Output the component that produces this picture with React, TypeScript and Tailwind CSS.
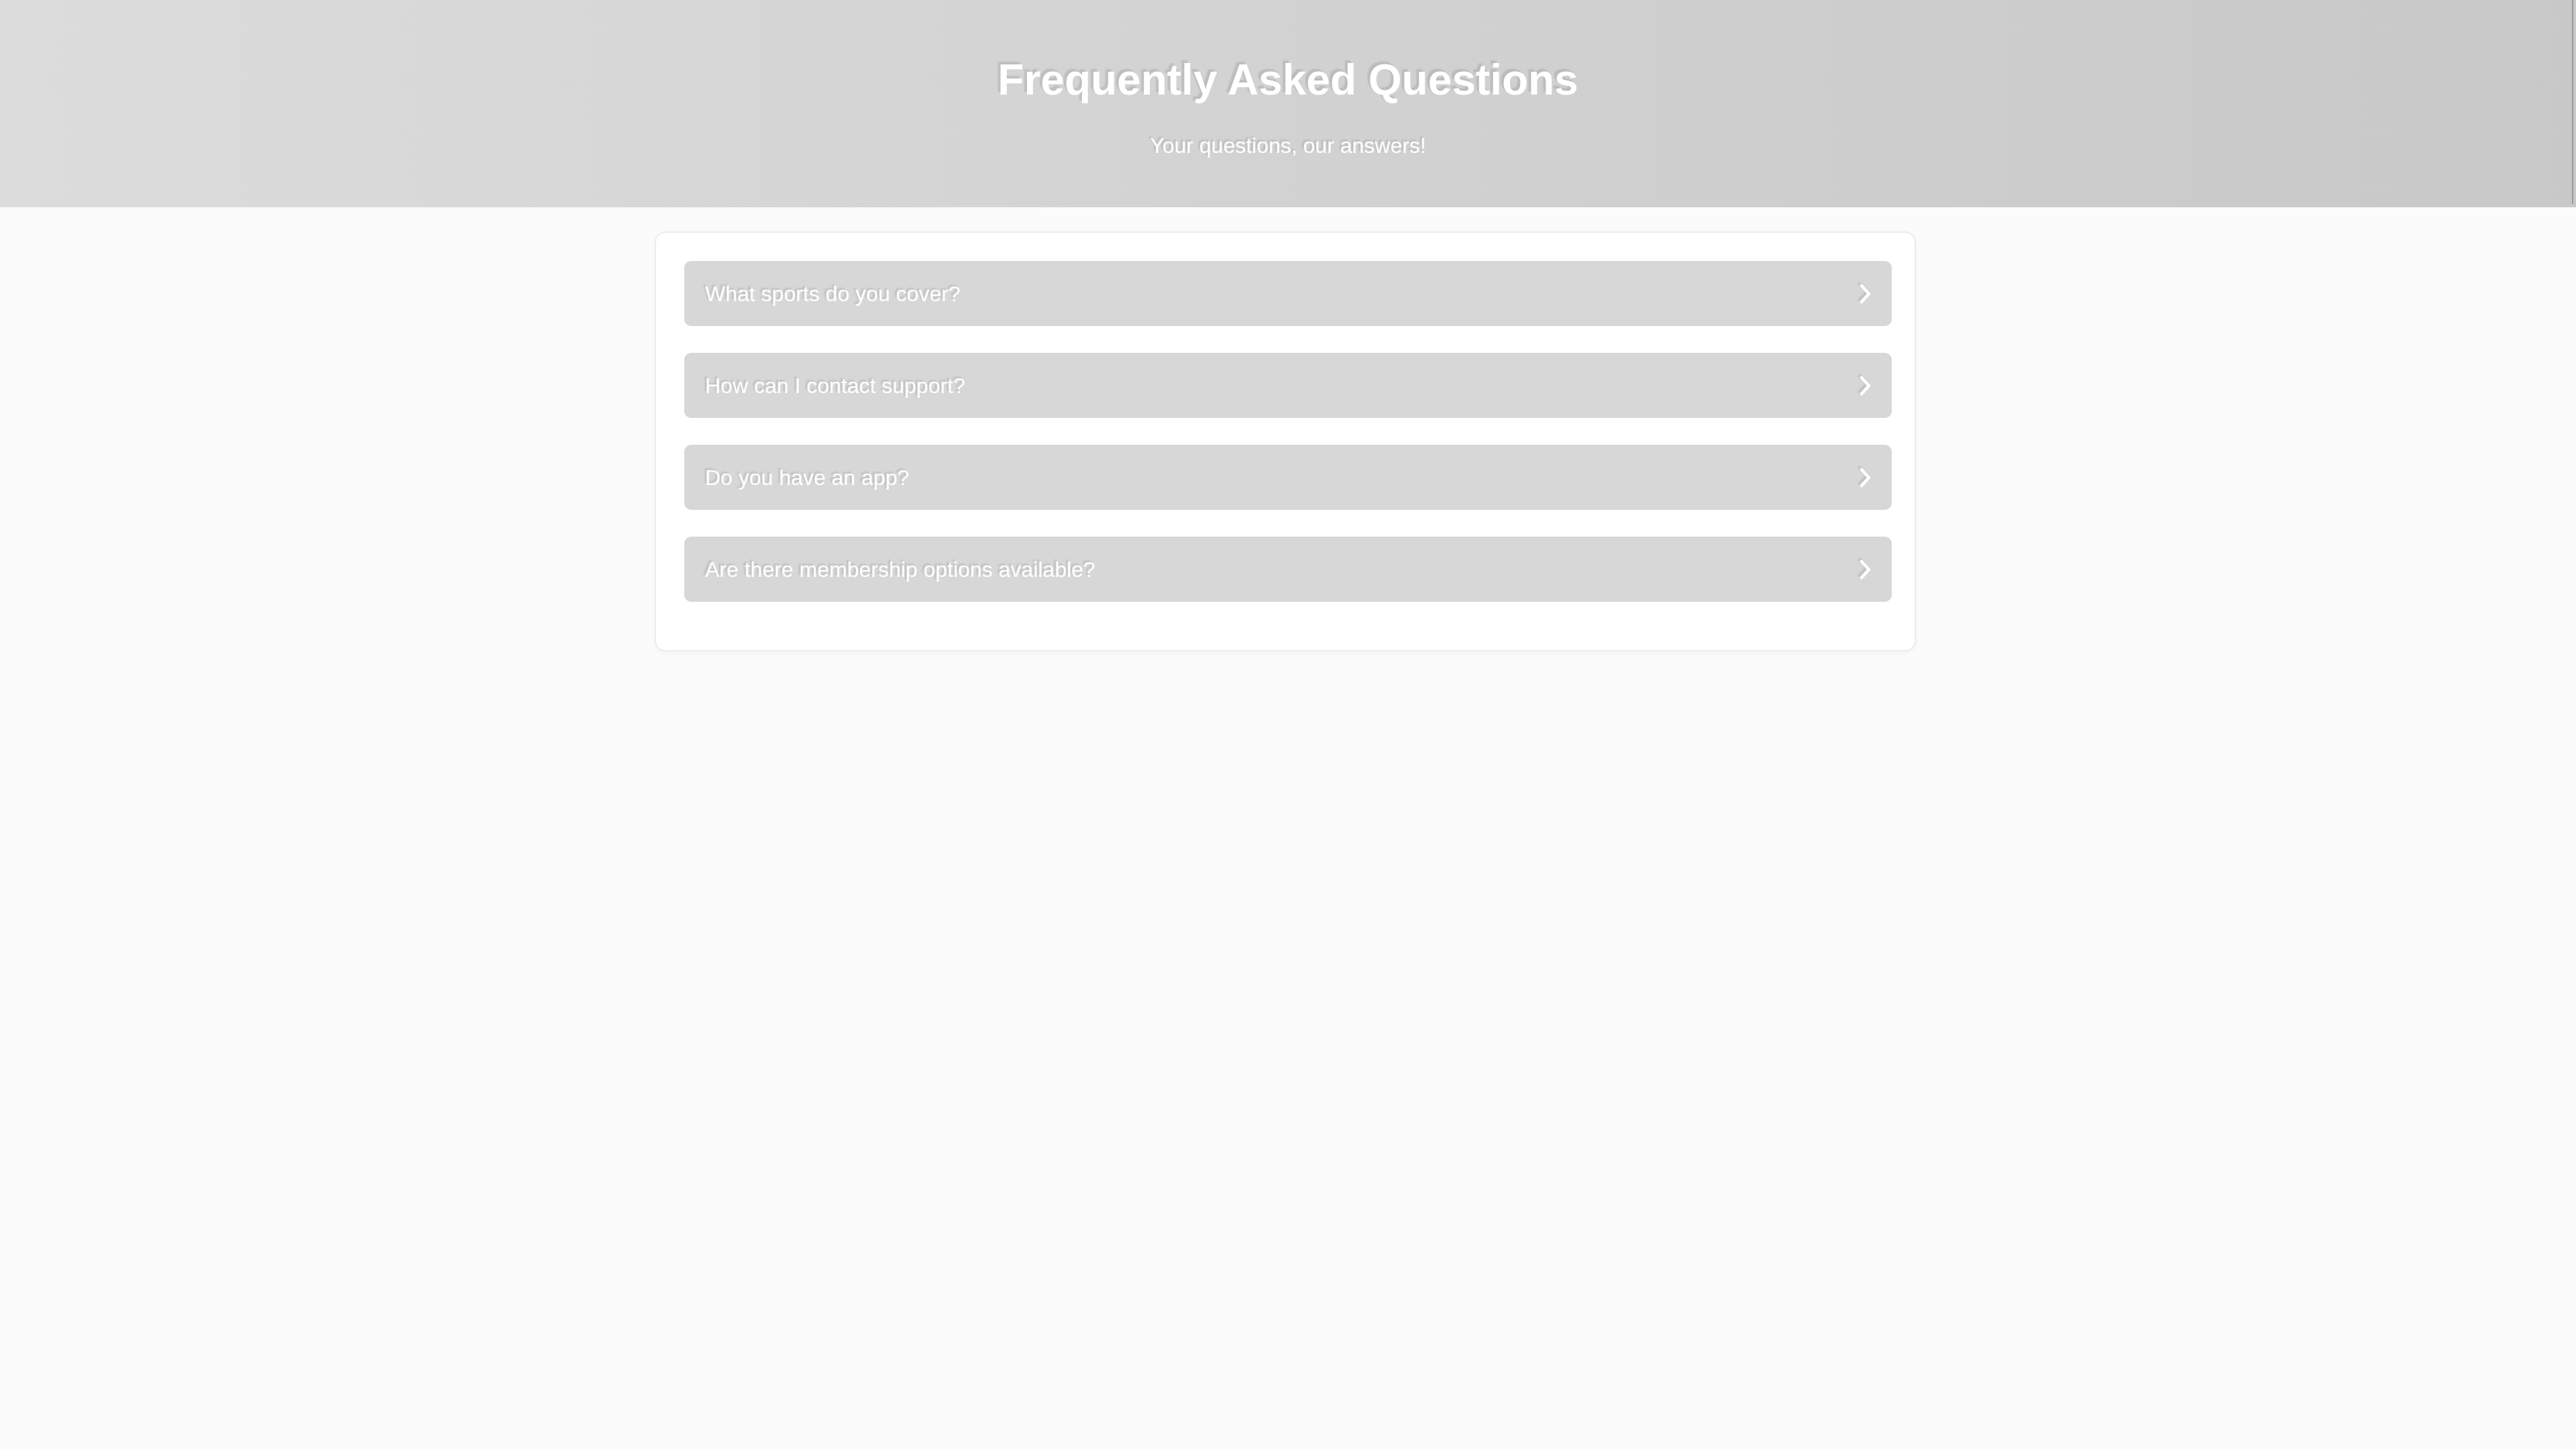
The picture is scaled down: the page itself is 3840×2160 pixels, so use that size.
import React from "react";

const questions = [
  "What sports do you cover?",
  "How can I contact support?",
  "Do you have an app?",
  "Are there membership options available?",
];

const Chevron: React.FC = () => (
  <svg width="20" height="34" viewBox="0 0 20 34" fill="none" className="[filter:drop-shadow(-3px_-3px_1px_rgba(0,0,0,0.1))]">
    <polyline
      points="5,5 16,17 5,29"
      stroke="white"
      strokeWidth="4.5"
      strokeLinecap="round"
      strokeLinejoin="round"
    />
  </svg>
);

const FaqItem: React.FC<{ question: string }> = ({ question }) => (
  <button className="flex h-[97px] w-full items-center justify-between rounded-[10px] bg-[#d7d7d7] pl-[31px] pr-[30px] text-left">
    <span className="text-[32px] leading-[48px] text-white [text-shadow:-3px_-3px_2px_rgba(0,0,0,0.1)]">
      {question}
    </span>
    <Chevron />
  </button>
);

export default function App() {
  return (
    <div className="min-h-[2160px] w-full bg-[#fbfbfb] font-['Liberation_Sans',Arial,sans-serif]">
      <header className="relative bg-gradient-to-r from-[#dcdcdc] to-[#c8c8c8] px-10 pt-[81px] pb-[68px] text-center">
        <h1 className="text-[64px] font-bold leading-[77px] text-white [text-shadow:-4px_-4px_2px_rgba(0,0,0,0.1)]">
          Frequently Asked Questions
        </h1>
        <p className="mt-[35px] text-[32px] leading-[48px] text-white [text-shadow:-3px_-3px_2px_rgba(0,0,0,0.1)]">
          Your questions, our answers!
        </p>
        <div className="absolute right-[4px] top-0 h-[304px] w-[2px] bg-[#9a9a9a]" />
      </header>

      <main className="mx-auto mt-[36px] w-[1880px] -translate-x-[4px] rounded-[16px] border-2 border-[#ececec] bg-white pl-[42px] pr-[34px] pt-[42px] pb-[72px] shadow-[0_3px_8px_rgba(0,0,0,0.035)]">
        <div className="flex flex-col gap-[40px]">
          {questions.map((q) => (
            <FaqItem key={q} question={q} />
          ))}
        </div>
      </main>
    </div>
  );
}
